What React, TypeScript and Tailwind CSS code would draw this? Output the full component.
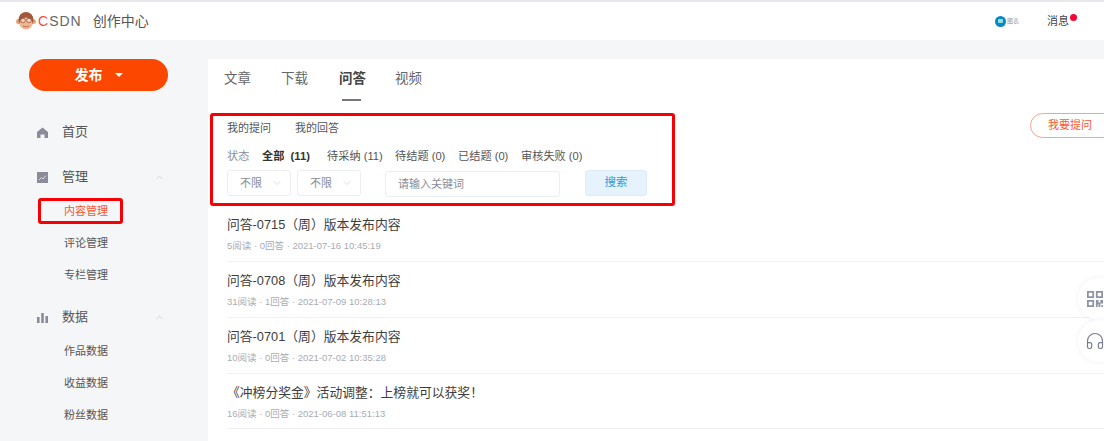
import { ChevronDown, ChevronUp, Headphones } from 'lucide-react';

const cjk = 'font-["Liberation_Sans","Noto_Sans_CJK_SC",sans-serif]';

const questions = [
  { title: '问答-0715（周）版本发布内容', meta: '5阅读 · 0回答 · 2021-07-16 10:45:19' },
  { title: '问答-0708（周）版本发布内容', meta: '31阅读 · 1回答 · 2021-07-09 10:28:13' },
  { title: '问答-0701（周）版本发布内容', meta: '10阅读 · 0回答 · 2021-07-02 10:35:28' },
  { title: '《冲榜分奖金》活动调整：上榜就可以获奖！', meta: '16阅读 · 0回答 · 2021-06-08 11:51:13' },
];

function Monkey() {
  return (
    <svg width="20" height="18" viewBox="0 0 20 18">
      <circle cx="2.5" cy="9.5" r="2.5" fill="#e8a27c" />
      <circle cx="17.5" cy="9.5" r="2.5" fill="#e8a27c" />
      <ellipse cx="10" cy="8" rx="7.5" ry="8" fill="#a3583a" />
      <ellipse cx="10" cy="11.5" rx="6.5" ry="6" fill="#f0b795" />
      <circle cx="7" cy="8.5" r="2.3" fill="#f7d3bb" stroke="#8a4a30" strokeWidth="0.7" />
      <circle cx="13" cy="8.5" r="2.3" fill="#f7d3bb" stroke="#8a4a30" strokeWidth="0.7" />
      <path d="M7 14c2 1 4 1 6 0" stroke="#a3583a" strokeWidth="0.8" fill="none" />
    </svg>
  );
}

function Header() {
  return (
    <header className="h-[40px] shrink-0 border-t-2 border-[#e8e8ed] bg-white flex items-center pl-[16px] pr-[35px]">
      <Monkey />
      <span className='ml-[2px] text-[14px] tracking-[1px] font-["Liberation_Sans",sans-serif]'>
        <span className="text-[#f0533a]">C</span>
        <span className="text-[#666]">SDN</span>
      </span>
      <span className="ml-[11px] text-[14px] text-[#555]">创作中心</span>
      <div className="ml-auto flex items-center">
        <span className="w-[11px] h-[11px] rounded-full bg-[#0b86c4] flex items-center justify-center">
          <span className="w-[5px] h-[4px] rounded-[1px] bg-[#8fe0d8]" />
        </span>
        <span className="ml-[1px] text-[6px] leading-none text-[#999]">图表</span>
        <div className="ml-[28px] relative text-[11px] text-[#444]">
          消息
          <span className="absolute -right-[8px] top-[1px] w-[7px] h-[7px] rounded-full bg-[#f5082f]" />
        </div>
      </div>
    </header>
  );
}

function NavGroup({ icon, label, open }: { icon: React.ReactNode; label: string; open?: boolean }) {
  return (
    <div className="flex items-center h-[20px] pl-[37px] pr-[43px]">
      <span className="w-[11px] h-[11px] flex">{icon}</span>
      <span className="ml-[14px] text-[13px] text-[#555]">{label}</span>
      {open && <ChevronUp size={11} strokeWidth={1.2} className="ml-auto text-[#bbb]" />}
    </div>
  );
}

function SubItem({ label }: { label: string }) {
  return <div className="h-[32px] pl-[64px] flex items-center text-[11px] text-[#555]">{label}</div>;
}

function Sidebar() {
  return (
    <aside className="w-[208px] shrink-0 pt-[19px]">
      <div className="mx-[29px] w-[139px] h-[32px] rounded-full bg-[#fc4700] text-white flex items-center justify-center gap-[12px] text-[14px] font-bold">
        发布
        <span className="w-0 h-0 border-x-[4px] border-x-transparent border-t-[4px] border-t-white" />
      </div>

      <div className="mt-[31px]">
        <NavGroup
          label="首页"
          icon={
            <svg viewBox="0 0 11 11" className="w-[11px] h-[11px]">
              <path d="M5.5 0.5 11 5v6H7.5V7.5h-4V11H0V5z" fill="#8a8d99" />
            </svg>
          }
        />
      </div>
      <div className="mt-[25px]">
        <NavGroup
          open
          label="管理"
          icon={
            <svg viewBox="0 0 11 11" className="w-[11px] h-[11px]">
              <rect width="11" height="11" fill="#8a8d99" />
              <path d="M2 8l2.5-2.5L6 7l3-3.5" stroke="#fff" strokeWidth="0.7" fill="none" />
            </svg>
          }
        />
      </div>
      <div className="mt-[11px]">
        <div className="relative h-[26px] pl-[64px] flex items-center text-[11px] text-[#fc5531]">
          内容管理
          <span className="absolute left-[38px] top-0 w-[85px] h-[26px] border-[3px] border-[#f60006] rounded-[3px]" />
        </div>
        <div className="mt-[3px]">
          <SubItem label="评论管理" />
          <SubItem label="专栏管理" />
        </div>
      </div>
      <div className="mt-[16px]">
        <NavGroup
          open
          label="数据"
          icon={
            <svg viewBox="0 0 11 11" className="w-[11px] h-[11px]">
              <path d="M0 5h2.6v6H0zM4.2 1h2.6v10H4.2zM8.4 4H11v7H8.4z" fill="#8a8d99" />
            </svg>
          }
        />
      </div>
      <div className="mt-[8px]">
        <SubItem label="作品数据" />
        <SubItem label="收益数据" />
        <SubItem label="粉丝数据" />
      </div>
    </aside>
  );
}

function Select() {
  return (
    <div className="w-[64px] h-[26px] border border-[#eceef2] rounded-[3px] bg-white flex items-center pl-[12px] text-[11px] text-[#8a8d99]">
      不限
      <ChevronDown size={12} strokeWidth={1} className="ml-[9px] text-[#bbb]" />
    </div>
  );
}

function Filters() {
  const tabs = [
    { label: '待采纳 (11)', cls: 'w-[68px]' },
    { label: '待结题 (0)', cls: 'w-[63px]' },
    { label: '已结题 (0)', cls: 'w-[63px]' },
    { label: '审核失败 (0)', cls: 'w-[70px]' },
  ];
  return (
    <section className="ml-[2px] w-[465px] h-[93px] border-[3px] border-[#f60006] rounded-[3px] pl-[14px] pt-[2px]">
      <div className="flex h-[20px] items-center text-[11px] text-[#555]">
        <span className="w-[68px]">我的提问</span>
        <span>我的回答</span>
      </div>
      <div className="mt-[8px] flex h-[20px] items-center text-[11.2px] text-[#555]">
        <span className="w-[35px] text-[#8a8d99]">状态</span>
        <span className="w-[65px] font-bold text-[#333]">全部&nbsp;&nbsp;(11)</span>
        {tabs.map(t => (
          <span key={t.label} className={`${t.cls} whitespace-nowrap`}>
            {t.label}
          </span>
        ))}
      </div>
      <div className="mt-[4px] flex items-start">
        <Select />
        <div className="ml-[6px]">
          <Select />
        </div>
        <div className="mt-[1px] ml-[24px] w-[175px] h-[26px] border border-[#eceef2] rounded-[3px] flex items-center pl-[12px] text-[11px] text-[#8a8d99]">
          请输入关键词
        </div>
        <div className="ml-[25px] w-[62px] h-[26px] border border-[#dcecf8] bg-[#e6f3fc] rounded-[3px] flex items-center justify-center text-[11.5px] text-[#2d9cdb]">
          搜索
        </div>
      </div>
    </section>
  );
}

function Main() {
  return (
    <main className="relative flex-1 mt-[19px] bg-white">
      <nav className="flex h-[43px] pl-[16px] text-[13.5px] text-[#666] pt-[10px]">
        <span className="w-[57px]">文章</span>
        <span className="w-[58px]">下载</span>
        <span className="relative w-[56px] font-bold text-[#444]">
          问答
          <span className="absolute left-[3px] top-[30px] w-[19px] h-[2px] bg-[#777]" />
        </span>
        <span>视频</span>
      </nav>
      <div className="mt-[11px]">
        <Filters />
      </div>
      <span className="absolute left-[822px] top-[54px] w-[90px] h-[25px] rounded-full border border-[#fba18f] flex items-center pl-[17px] text-[11px] text-[#fc5531]">
        我要提问
      </span>
      <ul className="ml-[19px]">
        {questions.map(q => (
          <li key={q.meta} className="h-[56px] last:h-[55px] border-b border-[#f0f0f2] pt-[9px]">
            <div className="h-[20px] leading-[20px] text-[12.8px] text-[#3d3d3d] whitespace-nowrap">{q.title}</div>
            <div className="mt-[4px] h-[14px] leading-[14px] text-[9.5px] text-[#a8abb5] whitespace-nowrap">{q.meta}</div>
          </li>
        ))}
      </ul>
      <div className="absolute left-[870px] top-[219px] w-[42px] h-[42px] rounded-full bg-white shadow-[0_0_6px_rgba(0,0,0,0.06)] flex items-center pl-[9px]">
        <svg viewBox="0 0 18 18" className="w-[16px] h-[16px]" fill="#8f93a3">
          <path d="M0 0h8v8H0zM2 2v4h4V2zM10 0h8v8h-8zM12 2v4h4V2zM0 10h8v8H0zM2 12v4h4v-4z" fillRule="evenodd" />
          <path d="M10 10h3v3h2v-3h3v4h-3v4h-2v-3h-1v3h-2zM16 16h2v2h-2z" />
        </svg>
      </div>
      <div className="absolute left-[870px] top-[261px] w-[42px] h-[42px] rounded-full bg-white shadow-[0_0_6px_rgba(0,0,0,0.06)] flex items-center pl-[7px]">
        <Headphones size={20} strokeWidth={1.4} className="text-[#777b8a]" />
      </div>
    </main>
  );
}

export default function App() {
  return (
    <div className={`w-[1104px] h-[441px] overflow-hidden bg-[#f5f6f7] flex flex-col ${cjk}`}>
      <Header />
      <div className="flex flex-1 min-h-0">
        <Sidebar />
        <Main />
      </div>
    </div>
  );
}
